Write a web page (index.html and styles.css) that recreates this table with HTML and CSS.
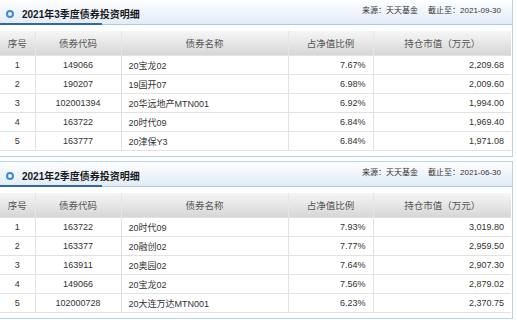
FILE: index.html
```html
<!DOCTYPE html>
<html>
<head>
<meta charset="utf-8">
<link rel="stylesheet" href="styles.css">
</head>
<body>
<div class="page">
  <section class="panel">
    <div class="bar">
      <div class="title"><span class="dot"></span>2021年3季度债券投资明细</div>
      <div class="src">来源：天天基金<span class="sp"></span>截止至：2021-09-30</div>
    </div>
    <table class="tbl">
      <colgroup><col class="c1"><col class="c2"><col class="c3"><col class="c4"><col class="c5"></colgroup>
      <thead><tr><th>序号</th><th>债券代码</th><th>债券名称</th><th>占净值比例</th><th>持仓市值（万元）</th></tr></thead>
      <tbody>
        <tr><td class="ctr">1</td><td class="ctr">149066</td><td>20宝龙02</td><td class="r">7.67%</td><td class="r">2,209.68</td></tr>
        <tr><td class="ctr">2</td><td class="ctr">190207</td><td>19国开07</td><td class="r">6.98%</td><td class="r">2,009.60</td></tr>
        <tr><td class="ctr">3</td><td class="ctr">102001394</td><td>20华远地产MTN001</td><td class="r">6.92%</td><td class="r">1,994.00</td></tr>
        <tr><td class="ctr">4</td><td class="ctr">163722</td><td>20时代09</td><td class="r">6.84%</td><td class="r">1,969.40</td></tr>
        <tr><td class="ctr">5</td><td class="ctr">163777</td><td>20津保Y3</td><td class="r">6.84%</td><td class="r">1,971.08</td></tr>
      </tbody>
    </table>
  </section>
  <section class="panel">
    <div class="bar">
      <div class="title"><span class="dot"></span>2021年2季度债券投资明细</div>
      <div class="src">来源：天天基金<span class="sp"></span>截止至：2021-06-30</div>
    </div>
    <table class="tbl">
      <colgroup><col class="c1"><col class="c2"><col class="c3"><col class="c4"><col class="c5"></colgroup>
      <thead><tr><th>序号</th><th>债券代码</th><th>债券名称</th><th>占净值比例</th><th>持仓市值（万元）</th></tr></thead>
      <tbody>
        <tr><td class="ctr">1</td><td class="ctr">163722</td><td>20时代09</td><td class="r">7.93%</td><td class="r">3,019.80</td></tr>
        <tr><td class="ctr">2</td><td class="ctr">163377</td><td>20融创02</td><td class="r">7.77%</td><td class="r">2,959.50</td></tr>
        <tr><td class="ctr">3</td><td class="ctr">163911</td><td>20奥园02</td><td class="r">7.64%</td><td class="r">2,907.30</td></tr>
        <tr><td class="ctr">4</td><td class="ctr">149066</td><td>20宝龙02</td><td class="r">7.56%</td><td class="r">2,879.02</td></tr>
        <tr><td class="ctr">5</td><td class="ctr">102000728</td><td>20大连万达MTN001</td><td class="r">6.23%</td><td class="r">2,370.75</td></tr>
      </tbody>
    </table>
  </section>
</div>
</body>
</html>
```

FILE: styles.css
```css
html, body {
  margin: 0;
  padding: 0;
  background: #ffffff;
}
body {
  font-family: "Liberation Sans", Arial, "Noto Sans CJK SC", sans-serif;
  color: #333;
  overflow: hidden;
}
.page {
  margin: -1px 0 0 -2px;
  width: 515px;
  display: flex;
  flex-direction: column;
  gap: 4px;
}
.panel {
  border: 1px solid #b8d3ea;
  padding: 0 1px 5px 1px;
  background: #fff;
}
.bar {
  position: relative;
  height: 24px;
  margin: 0 -1px;
  display: flex;
  justify-content: space-between;
  background: linear-gradient(#fdfeff, #e2ebf6);
  border-bottom: 1px solid #a9c9e6;
}
.bar::after {
  content: "";
  position: absolute;
  left: 0;
  bottom: -1px;
  width: 103px;
  height: 2px;
  background: #2d6aa6;
}
.title {
  display: flex;
  align-items: center;
  padding: 9px 0 0 7px;
  height: 12px;
  font-size: 10px;
  font-weight: bold;
  color: #1a1a1a;
  line-height: 12px;
}
.dot {
  width: 4px;
  height: 4px;
  border: 2px solid #3b8bd6;
  border-radius: 50%;
  margin-right: 8px;
  margin-top: -2px;
}
.src {
  padding: 6px 11px 0 0;
  font-size: 8px;
  line-height: 10px;
  color: #333;
}
.sp {
  display: inline-block;
  width: 10px;
}
.tbl {
  margin-top: 6px;
  width: 511px;
  border-collapse: collapse;
  table-layout: fixed;
  font-size: 9px;
}
.c1 { width: 35px; }
.c2 { width: 86px; }
.c3 { width: 167px; }
.c4 { width: 85px; }
.c5 { width: 138px; }
.tbl th {
  height: 24px;
  padding: 0;
  font-weight: normal;
  font-size: 9.5px;
  color: #555;
  background: linear-gradient(#f6f6f6, #d6d6d6);
  border-left: 1px solid #e6e6e6;
  border-right: 1px solid #e6e6e6;
}
.tbl td {
  height: 18px;
  padding: 0 7px;
  border: 1px solid #e2e2e2;
  white-space: nowrap;
}
.tbl td:first-child, .tbl th:first-child { border-left: none; }
.tbl td:last-child, .tbl th:last-child { border-right: none; }
.ctr { text-align: center; }
.r { text-align: right; }
```
